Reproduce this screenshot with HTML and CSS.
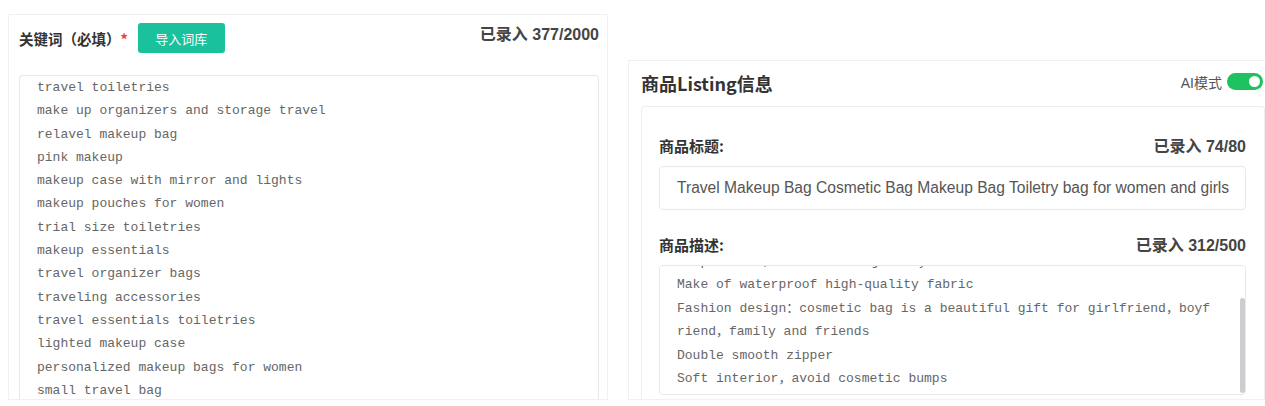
FILE: index.html
```html
<!DOCTYPE html>
<html lang="zh">
<head>
  <meta charset="UTF-8">
  <title>商品Listing</title>
  <link rel="stylesheet" href="styles.css">
</head>
<body>
  <div class="page">

    <div class="keyword-card">
      <div class="keyword-head">
        <div class="head-left">
          <span class="field-title">关键词（必填）<span class="required">*</span></span>
          <button class="import-button">导入词库</button>
        </div>
        <span class="counter">已录入 377/2000</span>
      </div>
      <textarea class="keyword-area" spellcheck="false">travel toiletries
make up organizers and storage travel
relavel makeup bag
pink makeup
makeup case with mirror and lights
makeup pouches for women
trial size toiletries
makeup essentials
travel organizer bags
traveling accessories
travel essentials toiletries
lighted makeup case
personalized makeup bags for women
small travel bag
cosmetic bag for purse
hanging toiletry bag</textarea>
    </div>

    <div class="listing-card">
      <div class="listing-head">
        <span class="listing-title">商品Listing信息</span>
        <div class="ai-mode">
          <span>AI模式</span>
          <span class="switch"><span class="switch-knob"></span></span>
        </div>
      </div>

      <div class="listing-body">
        <div class="field-row">
          <span class="field-label">商品标题:</span>
          <span class="counter">已录入 74/80</span>
        </div>
        <div class="title-input">Travel Makeup Bag Cosmetic Bag Makeup Bag Toiletry bag for women and girls</div>

        <div class="field-row desc-row">
          <span class="field-label">商品描述:</span>
          <span class="counter">已录入 312/500</span>
        </div>
        <div class="desc-box">
          <textarea class="desc-area" spellcheck="false">Large capacity：this toiletry bag can hold all your cosmetics, skincare products, brushes and jewelry
Make of waterproof high-quality fabric
Fashion design：cosmetic bag is a beautiful gift for girlfriend，boyfriend，family and friends
Double smooth zipper
Soft interior，avoid cosmetic bumps</textarea>
          <span class="scroll-thumb"></span>
        </div>
      </div>
    </div>

  </div>
  <script src="script.js"></script>
</body>
</html>
```

FILE: styles.css
```css
body {
  margin: 0;
  background-color: #fff;
  font-family: 'Liberation Sans', 'Noto Sans CJK SC', sans-serif;
  color: #333;
  height: 406px;
  overflow: hidden;
}

.page {
  display: flex;
  align-items: flex-start;
  padding-left: 8px;
  gap: 20px;
  width: 1300px;
}

/* left: keywords */

.keyword-card {
  margin-top: 14px;
  width: 600px;
  height: 386px;
  border: 1px solid #f0f0f0;
  box-sizing: border-box;
  padding: 0 8px 0 10px;
  display: flex;
  flex-direction: column;
}

.keyword-head {
  display: flex;
  justify-content: space-between;
  align-items: flex-start;
  padding-top: 6px;
  height: 60px;
  box-sizing: border-box;
  flex-shrink: 0;
}

.head-left {
  display: flex;
  align-items: center;
  gap: 10px;
  margin-top: 2px;
}

.field-title {
  font-family: 'Noto Sans CJK SC', sans-serif;
  font-weight: bold;
  font-size: 14.5px;
  color: #333;
}

.required {
  color: #f23d3d;
}

.import-button {
  background-color: #19c29d;
  border: none;
  border-radius: 3px;
  color: #fff;
  font-family: 'Noto Sans CJK SC', sans-serif;
  font-size: 13px;
  width: 87px;
  height: 30px;
  padding: 0;
}

.counter {
  font-family: 'Liberation Sans', 'Noto Sans CJK SC', sans-serif;
  font-weight: bold;
  font-size: 16px;
  color: #444;
}

.keyword-area {
  flex: 1;
  resize: none;
  overflow: hidden;
  border: 1px solid #e8e8e8;
  border-bottom: none;
  border-radius: 4px 4px 0 0;
  padding: 0 0 0 17px;
  margin: 0;
  font-family: 'Liberation Mono', 'Noto Sans CJK SC', monospace;
  font-size: 13px;
  line-height: 23.3px;
  color: #666;
  outline: none;
}

/* right: listing */

.listing-card {
  margin-top: 60px;
  width: 650px;
  height: 340px;
  border: 1px solid #f0f0f0;
  box-sizing: border-box;
  padding: 0 12px;
}

.listing-head {
  display: flex;
  justify-content: space-between;
  align-items: center;
  height: 45px;
}

.listing-title {
  font-family: 'Noto Sans CJK SC', sans-serif;
  font-weight: bold;
  font-size: 18px;
  color: #333;
  padding-bottom: 2px;
}

.ai-mode {
  display: flex;
  align-items: center;
  gap: 5px;
  font-family: 'Liberation Sans', 'Noto Sans CJK SC', sans-serif;
  font-size: 14px;
  color: #555;
  margin-right: 2px;
  padding-bottom: 4px;
}

.switch {
  display: flex;
  align-items: center;
  justify-content: flex-end;
  width: 36px;
  height: 17px;
  border-radius: 9px;
  background-color: #1ec25e;
  padding: 0 3px;
  box-sizing: border-box;
}

.switch-knob {
  width: 11px;
  height: 11px;
  border-radius: 50%;
  background-color: #fff;
}

.listing-body {
  border: 1px solid #eeeeee;
  border-bottom: none;
  border-radius: 4px 4px 0 0;
  padding: 27px 18px 0 17px;
  height: 293px;
  box-sizing: border-box;
}

.field-row {
  display: flex;
  justify-content: space-between;
  align-items: center;
  height: 22px;
}

.field-label {
  font-family: 'Noto Sans CJK SC', sans-serif;
  font-weight: bold;
  font-size: 15px;
  color: #333;
}

.title-input {
  margin-top: 10px;
  height: 44px;
  border: 1px solid #e8e8e8;
  border-radius: 4px;
  box-sizing: border-box;
  padding: 0 17px;
  display: flex;
  align-items: center;
  white-space: nowrap;
  overflow: hidden;
  font-family: 'Liberation Sans', sans-serif;
  font-size: 15.6px;
  color: #555;
}

.desc-row {
  margin-top: 23px;
}

.desc-box {
  position: relative;
  margin-top: 10px;
}

.desc-area {
  display: block;
  width: 100%;
  height: 130px;
  box-sizing: border-box;
  resize: none;
  border: 1px solid #e8e8e8;
  border-radius: 4px;
  padding: 0 28px 3px 17px;
  font-family: 'Liberation Mono', 'Noto Sans CJK SC', monospace;
  font-size: 13px;
  line-height: 23.5px;
  color: #666;
  word-break: break-all;
  outline: none;
}

.scroll-thumb {
  position: absolute;
  right: 1px;
  bottom: 2px;
  width: 5px;
  height: 95px;
  border-radius: 3px;
  background-color: #cdcdd1;
}
```

FILE: script.js
```js
// description box shows its last lines
const desc = document.querySelector('.desc-area');
desc.scrollTop = desc.scrollHeight;
```
